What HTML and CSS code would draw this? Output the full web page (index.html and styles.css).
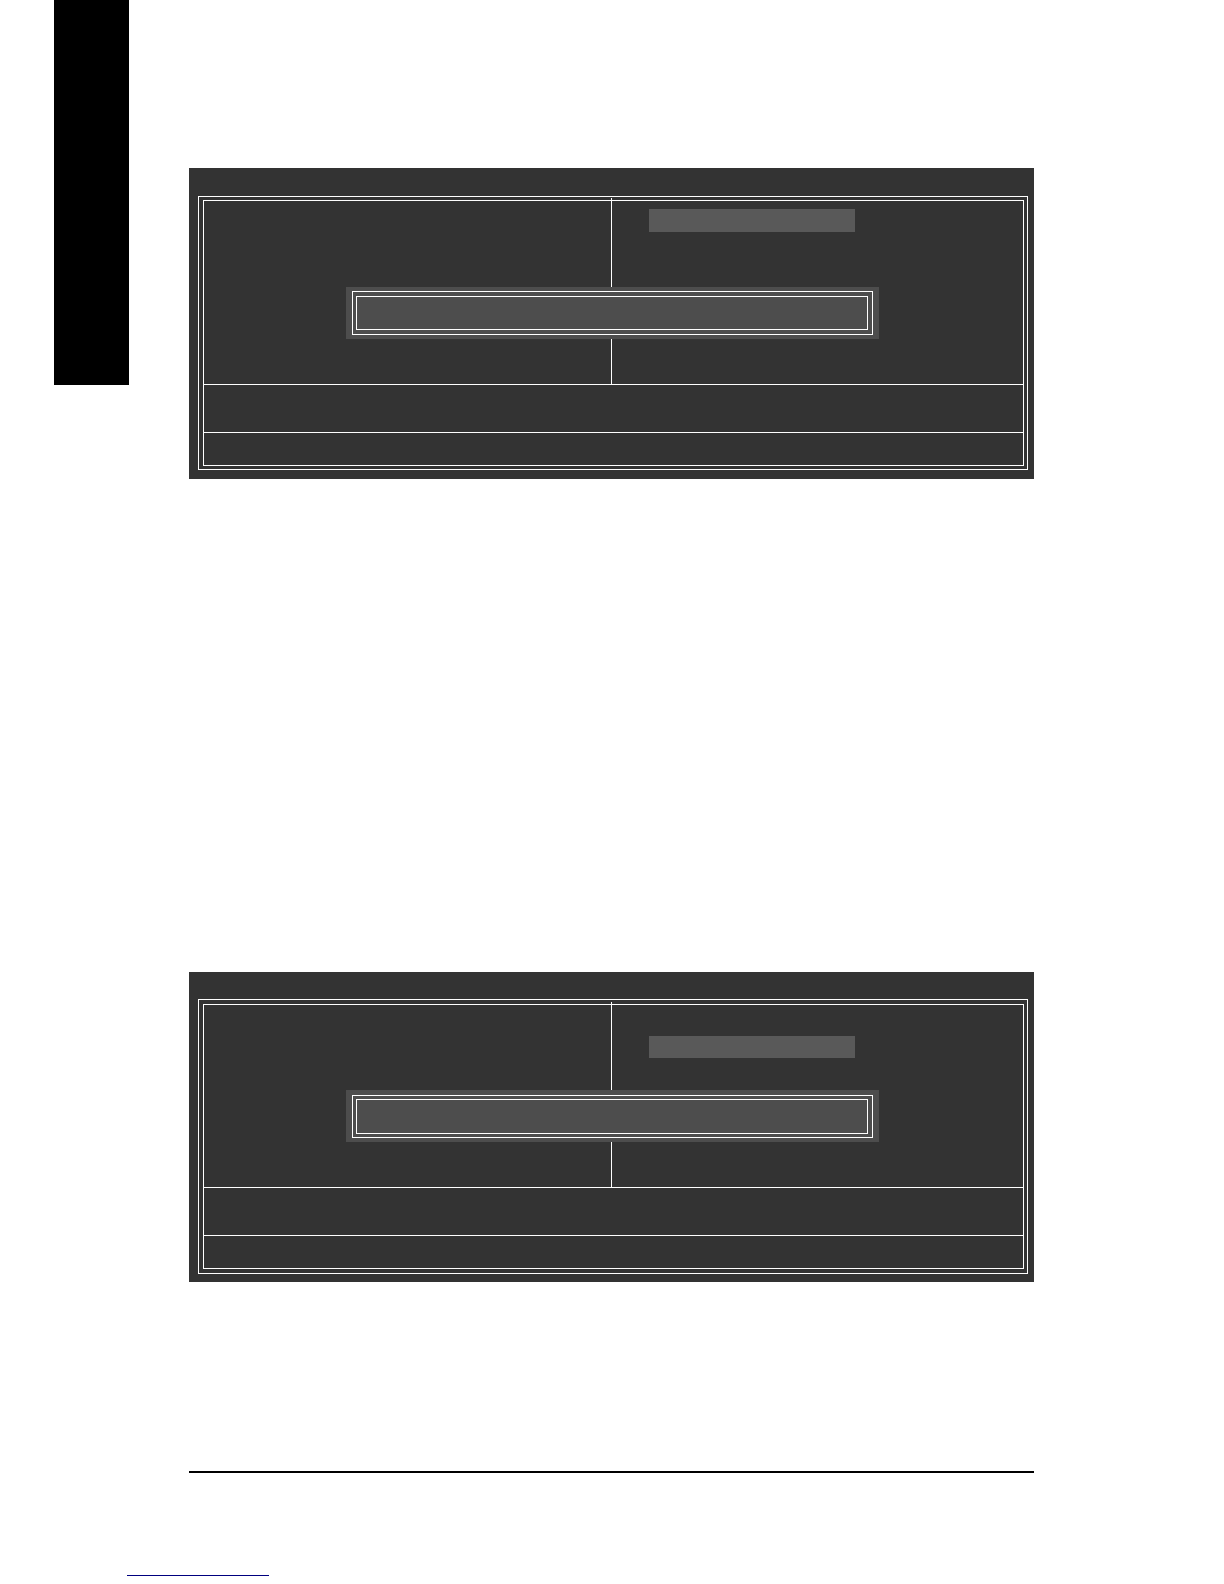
FILE: index.html
```html
<!DOCTYPE html>
<html lang="en">
<head>
<meta charset="utf-8">
<title>Setup screens</title>
<link rel="stylesheet" href="styles.css">
</head>
<body>
<div class="page">
  <aside class="chapter-tab"></aside>
  <main class="content">
    <section class="screen">
      <div class="frame">
        <div class="frame-inner">
          <div class="menu">
            <div class="menu-left"></div>
            <div class="menu-right"><div class="selected"></div></div>
            <div class="dialog"><div class="dialog-frame"><div class="dialog-body"></div></div></div>
          </div>
          <div class="keys"></div>
          <div class="hint"></div>
        </div>
      </div>
    </section>
    <section class="screen screen-second">
      <div class="frame">
        <div class="frame-inner">
          <div class="menu">
            <div class="menu-left"></div>
            <div class="menu-right"><div class="selected"></div></div>
            <div class="dialog"><div class="dialog-frame"><div class="dialog-body"></div></div></div>
          </div>
          <div class="keys"></div>
          <div class="hint"></div>
        </div>
      </div>
    </section>
    <hr class="rule">
  </main>
</div>
<footer class="footer"><a class="footer-link" href="#" aria-label="Home"></a></footer>
</body>
</html>
```
FILE: styles.css
```css
* {
  box-sizing: border-box;
}

body {
  margin: 0;
  background: #fff;
  font-family: "Liberation Sans", sans-serif;
}

.page {
  display: grid;
  grid-template-columns: 75px 1fr;
  column-gap: 60px;
  align-items: start;
  padding: 0 190px 0 54px;
}

.chapter-tab {
  height: 385px;
  background: #000;
}

.content {
  padding-top: 168px;
}

.screen {
  padding: 28px 6px 9px 9px;
  background: #333;
}

.frame {
  padding: 3px 3px 3px 4px;
  border: 1px solid #fff;
}

.frame-inner {
  border: 1px solid #fff;
}

.menu {
  position: relative;
  display: grid;
  grid-template-columns: 408fr 411fr;
  height: 183px;
}

.menu-left {
  position: relative;
}

.menu-left::after {
  content: "";
  position: absolute;
  top: -3px;
  right: 0;
  bottom: 0;
  width: 1px;
  background: #fff;
}

.menu-right {
  padding: 8px 0 0 37px;
}

.selected {
  width: 206px;
  max-width: 100%;
  height: 23px;
  background: #595959;
}

.dialog {
  position: absolute;
  top: 86px;
  left: 142px;
  right: 144px;
  padding: 4px 6px;
  background: #4d4d4d;
}

.dialog-frame {
  padding: 4px 4px 4px 3px;
  border: 1px solid #fff;
}

.dialog-body {
  height: 34px;
  border: 1px solid #fff;
  background: #4d4d4d;
}

.keys {
  height: 49px;
  border-top: 1px solid #fff;
  border-bottom: 1px solid #fff;
}

.hint {
  height: 32px;
}

.screen-second {
  margin-top: 493px;
  padding-top: 27px;
  padding-bottom: 8px;
}

.screen-second .frame {
  padding-top: 4px;
  padding-bottom: 4px;
}

.screen-second .menu {
  height: 182px;
}

.screen-second .menu-right {
  padding-top: 31px;
}

.screen-second .selected {
  height: 22px;
}

.screen-second .dialog {
  top: 85px;
  padding-top: 5px;
}

.screen-second .dialog-frame {
  padding-top: 3px;
  padding-bottom: 3px;
}

.screen-second .dialog-body {
  height: 35px;
}

.rule {
  height: 2px;
  margin: 189px 0 0;
  border: 0;
  background: #000;
}

.footer {
  padding: 92px 0 8px 127px;
}

.footer-link {
  display: block;
  width: 142px;
  height: 11px;
  border-bottom: 1px solid #00007f;
}
```
